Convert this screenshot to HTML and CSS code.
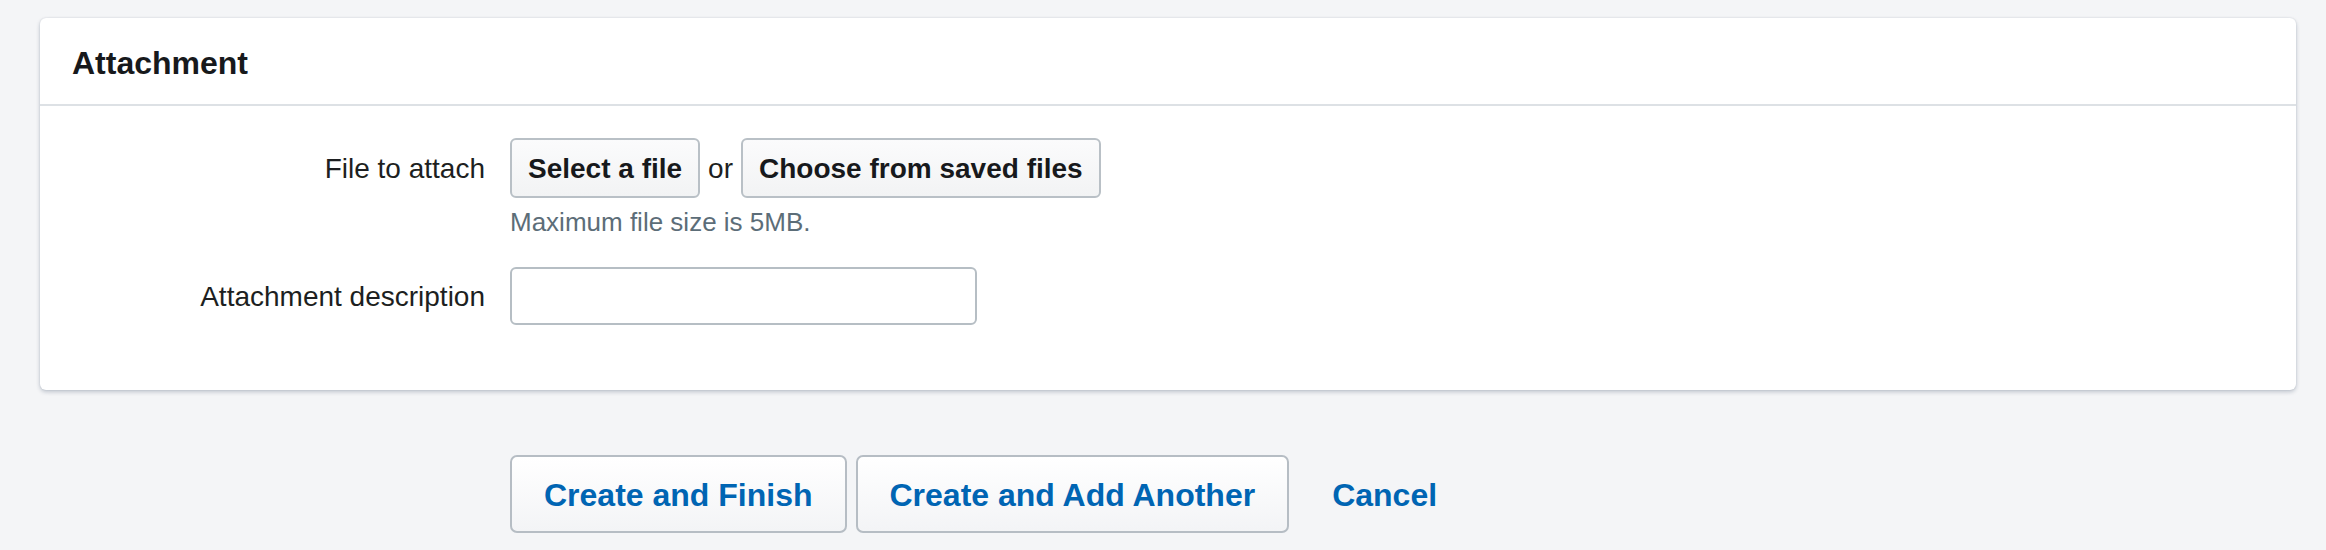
FILE: index.html
```html
<!DOCTYPE html>
<html lang="en">
<head>
<meta charset="utf-8">
<title>Attachment</title>
<link rel="stylesheet" href="styles.css">
</head>
<body>
<div class="card">
  <div class="card-header">
    <h2 class="card-title">Attachment</h2>
  </div>
  <div class="card-body">
    <div class="field">
      <label class="field-label">File to attach</label>
      <div class="field-control">
        <div class="file-choice">
          <button class="btn-secondary" type="button">Select a file</button>
          <span class="or">or</span>
          <button class="btn-secondary" type="button">Choose from saved files</button>
        </div>
        <div class="hint">Maximum file size is 5MB.</div>
      </div>
    </div>
    <div class="field field-second">
      <label class="field-label field-label-input">Attachment description</label>
      <div class="field-control">
        <input class="text-input" type="text">
      </div>
    </div>
  </div>
</div>
<div class="actions">
  <button class="btn-action" type="button">Create and Finish</button>
  <button class="btn-action" type="button">Create and Add Another</button>
  <a class="btn-link" href="#">Cancel</a>
</div>
</body>
</html>
```
FILE: styles.css
```css
* { box-sizing: border-box; }

html, body {
  margin: 0;
  padding: 0;
}

body {
  background: #f4f5f7;
  font-family: "Liberation Sans", Arial, Helvetica, sans-serif;
  color: #1d1f21;
  width: 2326px;
  height: 550px;
  overflow: hidden;
}

.card {
  margin: 18px 0 0 40px;
  width: 2256px;
  background: #ffffff;
  border-radius: 6px;
  box-shadow: 0 2px 4px rgba(9, 30, 66, 0.22), 0 0 2px rgba(9, 30, 66, 0.12);
}

.card-header {
  height: 88px;
  display: flex;
  align-items: center;
  padding: 6px 32px 2px 32px;
  border-bottom: 2px solid #dde1e5;
}

.card-title {
  margin: 0;
  font-size: 32px;
  line-height: 32px;
  font-weight: 700;
  color: #17191c;
}

.card-body {
  padding: 32px 0 65px 0;
}

.field {
  display: grid;
  grid-template-columns: 445px 1fr;
  column-gap: 25px;
}

.field-second {
  margin-top: 27px;
}

.field-label {
  text-align: right;
  font-size: 28px;
  padding-top: 2px;
  line-height: 58px;
  color: #1d1f21;
}

.field-label-input {
  line-height: 56px;
}

.file-choice {
  display: flex;
  align-items: center;
  gap: 8px;
}

.btn-secondary {
  height: 60px;
  padding: 2px 16px 0 16px;
  border: 2px solid #b9c0c6;
  border-radius: 6px;
  background: linear-gradient(#fbfbfc, #f2f3f4);
  font-family: "Liberation Sans", Arial, Helvetica, sans-serif;
  font-size: 28px;
  line-height: 54px;
  font-weight: 700;
  color: #17191c;
}

.or {
  font-size: 28px;
  padding-top: 2px;
  line-height: 58px;
  color: #1d1f21;
}

.hint {
  margin-top: 6px;
  font-size: 26px;
  line-height: 36px;
  color: #5c6d78;
}

.text-input {
  display: block;
  width: 467px;
  height: 58px;
  border: 2px solid #b6bec4;
  border-radius: 6px;
  background: #ffffff;
  padding: 0 14px;
  font-family: "Liberation Sans", Arial, Helvetica, sans-serif;
  font-size: 28px;
}

.actions {
  margin: 65px 0 0 510px;
  display: flex;
  align-items: center;
  gap: 9px;
}

.btn-action {
  height: 78px;
  padding: 2px 32px 0 32px;
  border: 2px solid #b6bdc4;
  border-radius: 7px;
  background: linear-gradient(#ffffff, #f3f4f6);
  font-family: "Liberation Sans", Arial, Helvetica, sans-serif;
  font-size: 32px;
  line-height: 72px;
  font-weight: 700;
  color: #0065b3;
}

.btn-link {
  display: block;
  height: 78px;
  padding: 2px 32px 0 32px;
  border: 2px solid transparent;
  font-size: 32px;
  line-height: 72px;
  font-weight: 700;
  color: #0065b3;
  text-decoration: none;
}
```
